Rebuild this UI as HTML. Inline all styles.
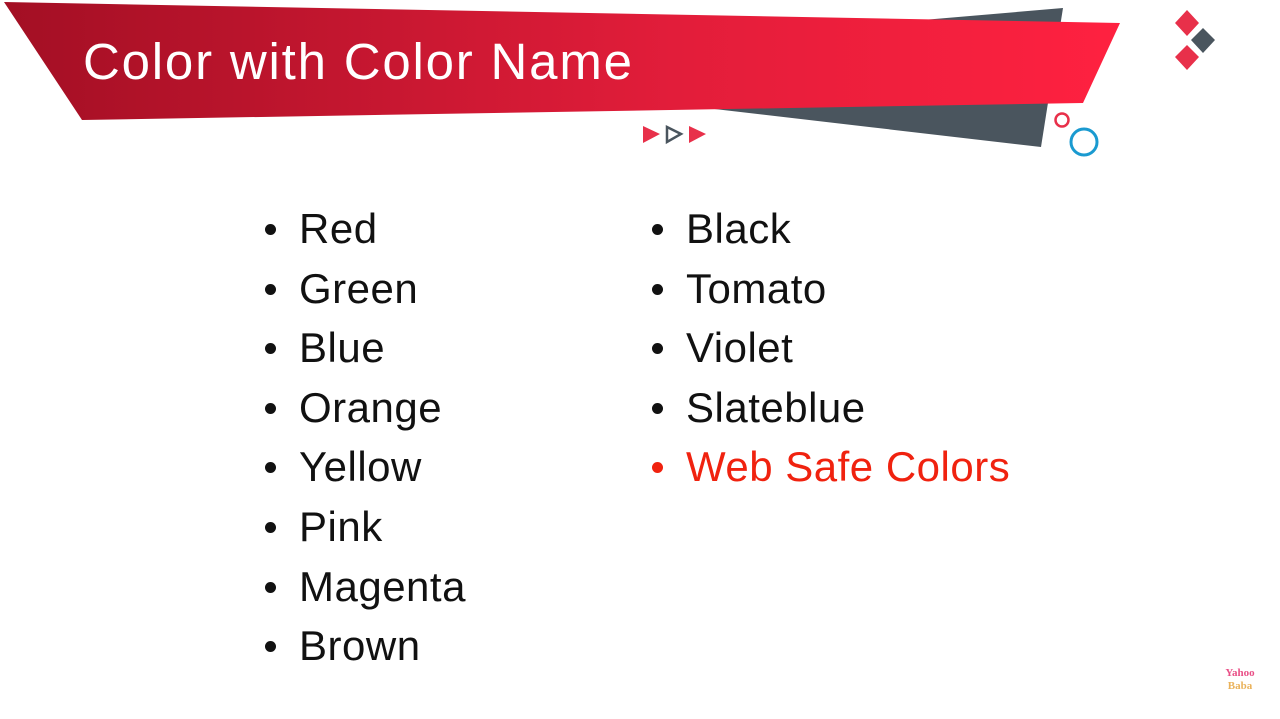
<!DOCTYPE html>
<html><head><style>
body{margin:0;width:1280px;height:719px;background:#fff;overflow:hidden;position:relative;font-family:"Liberation Sans",sans-serif}
.t{position:absolute;left:83px;top:33px;color:#fff;font-size:51px;line-height:58px;letter-spacing:1.8px;white-space:nowrap}
.li{position:absolute;font-size:42px;line-height:42px;color:#111;white-space:nowrap;letter-spacing:0.5px}
.li:before{content:"";position:absolute;left:-34px;top:16px;width:11px;height:11px;border-radius:50%;background:currentColor}
</style></head><body>
<svg width="1280" height="719" style="position:absolute;left:0;top:0">
<defs><linearGradient id="g" x1="0" x2="1"><stop offset="0" stop-color="#a30f24"/><stop offset="0.6" stop-color="#e21d3a"/><stop offset="1" stop-color="#ff2140"/></linearGradient></defs>
<polygon points="690,40 1063,8 1041,147 680,105" fill="#4a555e"/>
<polygon points="4,2 1120,23 1083,103 82,120" fill="url(#g)"/>
<polygon points="1187,10 1199,23 1187,36 1175,23" fill="#e8304a"/>
<polygon points="1203,28 1215,40 1203,53 1191,40" fill="#4a555e"/>
<polygon points="1187,45 1199,57 1187,70 1175,57" fill="#e8304a"/>
<polygon points="643,126 660,134 643,143" fill="#e8304a"/>
<polygon points="667,127 681,134 667,142" fill="none" stroke="#4a555e" stroke-width="2.5"/>
<polygon points="689,126 706,134 689,143" fill="#e8304a"/>
<circle cx="1062" cy="120" r="6.5" fill="none" stroke="#e8304a" stroke-width="2.5"/>
<circle cx="1084" cy="142" r="13" fill="none" stroke="#1a9ad0" stroke-width="3"/>
<text x="1240" y="676" font-size="11" font-weight="bold" fill="#e94f86" text-anchor="middle" font-family="Liberation Serif">Yahoo</text>
<text x="1240" y="689" font-size="11" font-weight="bold" fill="#eab25a" text-anchor="middle" font-family="Liberation Serif">Baba</text>
</svg>
<div class="t">Color with Color Name</div>
<div class="li" style="left:299px;top:208px">Red</div>
<div class="li" style="left:299px;top:268px">Green</div>
<div class="li" style="left:299px;top:327px">Blue</div>
<div class="li" style="left:299px;top:387px">Orange</div>
<div class="li" style="left:299px;top:446px">Yellow</div>
<div class="li" style="left:299px;top:506px">Pink</div>
<div class="li" style="left:299px;top:566px">Magenta</div>
<div class="li" style="left:299px;top:625px">Brown</div>
<div class="li" style="left:686px;top:208px">Black</div>
<div class="li" style="left:686px;top:268px">Tomato</div>
<div class="li" style="left:686px;top:327px">Violet</div>
<div class="li" style="left:686px;top:387px">Slateblue</div>
<div class="li" style="left:686px;top:446px;color:#f0220f">Web Safe Colors</div>
</body></html>
